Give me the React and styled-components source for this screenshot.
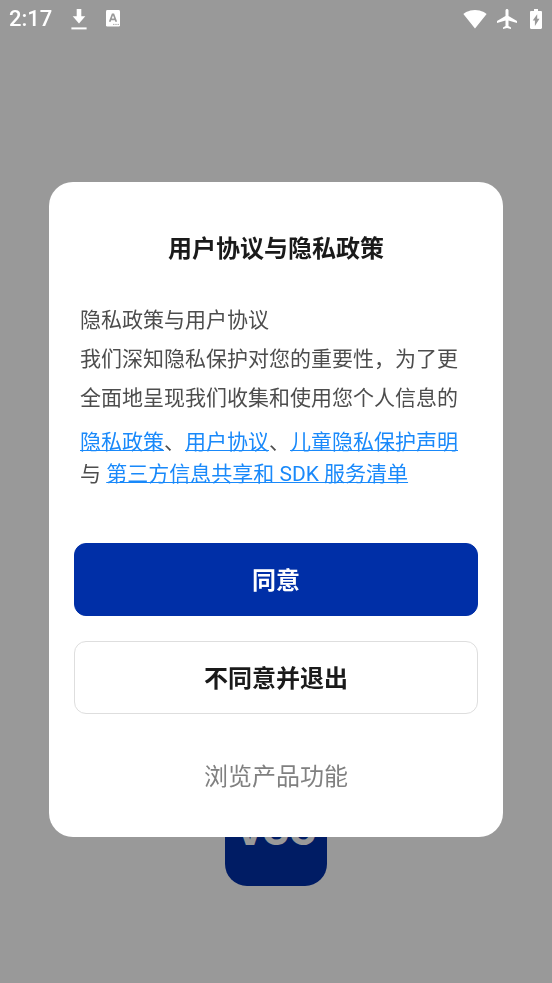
import styled, { createGlobalStyle } from 'styled-components'
import { MdSignalWifi4Bar, MdAirplanemodeActive } from 'react-icons/md'

const GlobalStyle = createGlobalStyle`
  * {
    box-sizing: border-box;
  }
  body {
    margin: 0;
    background: #fff;
    font-family: Roboto, 'Noto Sans CJK SC', sans-serif;
  }
`

const Splash = styled.div`
  min-height: 100vh;
  display: flex;
  flex-direction: column;
  justify-content: flex-end;
  align-items: center;
  padding-bottom: 97px;
`

const Logo = styled.div`
  width: 102px;
  height: 102px;
  display: flex;
  justify-content: center;
  align-items: center;
  padding-bottom: 6px;
  border-radius: 22px;
  background: #002fa7;
  color: #fff;
  font-family: Inter, 'Liberation Sans', sans-serif;
  font-size: 36px;
  font-weight: 800;
  line-height: 40px;
`

const Scrim = styled.div`
  position: fixed;
  inset: 0;
  display: flex;
  flex-direction: column;
  background: rgba(0, 0, 0, 0.4);
`

const StatusBar = styled.header`
  height: 36px;
  flex-shrink: 0;
  display: flex;
  justify-content: space-between;
  align-items: center;
  padding: 1px 10px 0 9px;
  color: #fff;
  svg {
    display: block;
  }
`

const StatusGroup = styled.div`
  display: flex;
  align-items: center;
  gap: ${({ $gap }) => $gap}px;
`

const Clock = styled.span`
  font-size: 22px;
  font-weight: 500;
  line-height: 36px;
`

const Center = styled.main`
  flex: 1;
  min-height: 0;
  display: flex;
  align-items: center;
  padding: 0 49px;
`

const Dialog = styled.section`
  flex: 1;
  max-height: 100%;
  overflow-y: auto;
  padding: 49px 25px 25px;
  border-radius: 24px;
  background: #fff;
`

const Title = styled.h1`
  margin: 0 0 34px;
  color: #1a1a1a;
  font-size: 24px;
  font-weight: 700;
  line-height: 36px;
  text-align: center;
`

const Policy = styled.div`
  padding: 0 6px;
  color: #4d4d4d;
  font-size: 21px;
  line-height: 39px;
  p {
    margin: 0;
  }
`

const Links = styled.p`
  margin: 0;
  padding: 8px 6px 0;
  color: #4d4d4d;
  font-size: 21px;
  line-height: 32px;
`

const PolicyLink = styled.a`
  color: #1989fa;
  text-decoration: underline;
  text-decoration-thickness: 1px;
`

const Actions = styled.div`
  display: flex;
  flex-direction: column;
  gap: 25px;
  margin-top: 53px;
`

const looks = {
  primary: { bg: '#002fa7', color: '#fff', border: '#002fa7', weight: 700 },
  outline: { bg: '#fff', color: '#1a1a1a', border: '#dedede', weight: 700 },
  plain: { bg: 'transparent', color: '#808080', border: 'transparent', weight: 400 },
}

const Button = styled.button`
  height: 73px;
  padding: 3px 0 0;
  border: 1px solid ${({ $look }) => looks[$look].border};
  border-radius: 12px;
  background: ${({ $look }) => looks[$look].bg};
  color: ${({ $look }) => looks[$look].color};
  font-family: inherit;
  font-size: 24px;
  font-weight: ${({ $look }) => looks[$look].weight};
  line-height: 36px;
  cursor: pointer;
`

const DownloadIcon = () => (
  <svg width='16' height='22' viewBox='0 0 16 22' fill='currentColor'>
    <path d='M5.7 1h4.6v7.2h4L8 15.6 1.7 8.2h4z' />
    <path d='M.4 19.4h15.2v2H.4z' />
  </svg>
)

const LanguageIcon = () => (
  <svg width='14' height='17' viewBox='0 0 14 17'>
    <rect width='14' height='16.6' rx='1.4' fill='currentColor' />
    <path
      d='M3.7 11.8 6.5 4.3h1L10.3 11.8M4.7 9.4h4.6'
      fill='none'
      stroke='#999'
      strokeWidth='1.7'
    />
    <path d='M7.2 14.4h1.2M9.4 14.4h1.2M11.6 14.4h1.2' stroke='#999' strokeWidth='1' />
  </svg>
)

const BatteryIcon = () => (
  <svg width='12' height='20' viewBox='0 0 12 20'>
    <path
      d='M4 0h4v2h2.8c.7 0 1.2.5 1.2 1.2v15.6c0 .7-.5 1.2-1.2 1.2H1.2C.5 20 0 19.5 0 18.8V3.2C0 2.5.5 2 1.2 2H4z'
      fill='currentColor'
    />
    <path d='M7.2 5.2v4.6h2.3L4.9 17v-5.4H2.7z' fill='#999' />
  </svg>
)

const App = () => {
  return (
    <>
      <GlobalStyle />
      <Splash>
        <Logo>VGC</Logo>
      </Splash>
      <Scrim>
        <StatusBar>
          <StatusGroup $gap={19}>
            <Clock>2:17</Clock>
            <DownloadIcon />
            <LanguageIcon />
          </StatusGroup>
          <StatusGroup $gap={11}>
            <StatusGroup $gap={8}>
              <MdSignalWifi4Bar size={24} />
              <MdAirplanemodeActive size={24} />
            </StatusGroup>
            <BatteryIcon />
          </StatusGroup>
        </StatusBar>
        <Center>
          <Dialog role='dialog' aria-labelledby='policy-title'>
            <Title id='policy-title'>用户协议与隐私政策</Title>
            <Policy>
              <p>隐私政策与用户协议</p>
              <p>我们深知隐私保护对您的重要性，为了更全面地呈现我们收集和使用您个人信息的</p>
            </Policy>
            <Links>
              <PolicyLink href='#privacy'>隐私政策</PolicyLink>、
              <PolicyLink href='#terms'>用户协议</PolicyLink>、
              <PolicyLink href='#children'>儿童隐私保护声明</PolicyLink>与{' '}
              <PolicyLink href='#third-party'>第三方信息共享和 SDK 服务清单</PolicyLink>
            </Links>
            <Actions>
              <Button type='button' $look='primary'>
                同意
              </Button>
              <Button type='button' $look='outline'>
                不同意并退出
              </Button>
              <Button type='button' $look='plain'>
                浏览产品功能
              </Button>
            </Actions>
          </Dialog>
        </Center>
      </Scrim>
    </>
  )
}

export default App
